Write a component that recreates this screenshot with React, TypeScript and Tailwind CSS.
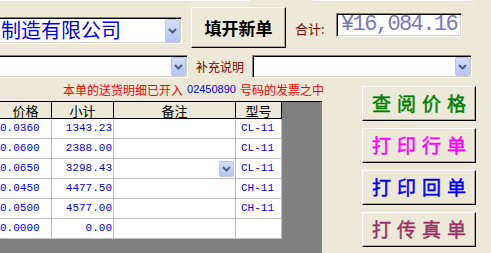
import React from 'react';

const rows = [
  { price: '0.0360', sub: '1343.23', model: 'CL-11' },
  { price: '0.0600', sub: '2388.00', model: 'CL-11' },
  { price: '0.0650', sub: '3298.43', model: 'CL-11', drop: true },
  { price: '0.0450', sub: '4477.50', model: 'CH-11' },
  { price: '0.0500', sub: '4577.00', model: 'CH-11' },
  { price: '0.0000', sub: '0.00', model: '' },
];

const sunken =
  'border border-t-[#808080] border-l-[#808080] border-b-white border-r-white shadow-[inset_1px_1px_0_#000,inset_-1px_-1px_0_#d4d0c8] bg-white';

const raised =
  'border border-t-white border-l-white border-b-black border-r-black shadow-[inset_-1px_-1px_0_#aca899] bg-[#ece9d8]';

function DropBtn({ className }: { className: string }) {
  return (
    <div
      className={
        'flex w-[15px] shrink-0 items-center justify-center rounded-[2px] border border-[#b4c6f0] bg-linear-to-b from-[#d3defd] to-[#b2c5f5] ' +
        className
      }
    >
      <svg width="9" height="6" viewBox="0 0 9 6">
        <path d="M1 1 L4.5 4.5 L8 1" fill="none" stroke="#4d6185" strokeWidth="2" />
      </svg>
    </div>
  );
}

function Combo({ className, btn, children }: { className: string; btn: string; children?: React.ReactNode }) {
  return (
    <div className={'flex items-center justify-between ' + sunken + ' ' + className}>
      <div className="min-w-0 flex-1 whitespace-nowrap">{children}</div>
      <DropBtn className={'mr-[1px] ' + btn} />
    </div>
  );
}

function SideButton({ color, children }: { color: string; children: React.ReactNode }) {
  return (
    <div
      className={
        'flex h-[35px] w-[114px] items-center justify-center pl-[6px] text-[19px] font-normal tracking-[6px] [-webkit-text-stroke:0.5px_currentColor] ' +
        raised +
        ' ' +
        color
      }
    >
      {children}
    </div>
  );
}

export default function App() {
  return (
    <div className="flex h-[253px] w-[491px] flex-col overflow-hidden bg-[#ece9d8] font-['Noto_Sans_CJK_SC',sans-serif]">
      {/* edges of controls above */}
      <div className="flex h-px">
        <div className="w-[250px] bg-white" />
        <div className="ml-[62px] w-[161px] bg-white" />
      </div>

      {/* Top row */}
      <div className="flex h-[54px] items-start">
        <Combo className="-ml-[3px] mt-[16px] h-[27px] w-[185px]" btn="h-[24px]">
          <span className="pl-[3px] text-[20px] leading-[24px] text-[#0000ff]">制造有限公司</span>
        </Combo>
        <div
          className={
            'ml-[9px] mt-[6px] flex h-[41px] w-[95px] items-center justify-center text-[17px] font-bold text-black ' + raised
          }
        >
          填开新单
        </div>
        <div className="ml-[9px] mt-[19px] w-[41px] text-[13px] leading-[17px] text-[#800000]">合计:</div>
        <div className={'mt-[12px] flex h-[24px] w-[126px] items-center pl-[4px] ' + sunken}>
          <span className="font-['Liberation_Mono',monospace] text-[22px] leading-none tracking-[-1.6px] text-[#7878c8]">
            ¥16,084.16
          </span>
        </div>
      </div>

      {/* Second row */}
      <div className="flex h-[23px] items-center">
        <Combo className="-ml-[3px] h-[23px] w-[191px]" btn="h-[19px]" />
        <div className="ml-[8px] w-[56px] text-[12px] leading-none text-[#800000]">补充说明</div>
        <Combo className="h-[23px] w-[220px]" btn="h-[19px]" />
      </div>

      {/* Middle */}
      <div className="flex flex-1">
        <div className="flex w-[322px] flex-col">
          <div className="flex h-[23px] items-center whitespace-nowrap pl-[63px] text-[12px] leading-none text-[#ff0000]">
            本单的送货明细已开入
            <span className="mx-[4px] font-['Liberation_Sans',sans-serif] text-[11px] text-[#0000ff]">02450890</span>
            号码的发票之中
          </div>
          <div className="flex-1 border-t border-black bg-[#808080]">
            {/* header */}
            <div className="flex h-[17px] text-[13px] leading-none text-black">
              {[
                ['价格', 'w-[52px]'],
                ['小计', 'w-[62px]'],
                ['备注', 'w-[122px]'],
                ['型号', 'w-[46px]'],
              ].map(([t, w]) => (
                <div
                  key={t}
                  className={'flex items-center justify-center border-r border-b border-black bg-[#ece9d8] ' + w}
                >
                  {t}
                </div>
              ))}
            </div>
            {/* body */}
            {rows.map((r, i) => (
              <div
                key={i}
                className="flex h-[20px] font-['Liberation_Mono',monospace] text-[11px] leading-none text-[#0000ff]"
              >
                <div className="flex w-[52px] items-center border-r border-b border-[#c0c0c0] bg-white">{r.price}</div>
                <div className="flex w-[62px] items-center justify-end border-r border-b border-[#c0c0c0] bg-white pr-[1px]">
                  {r.sub}
                </div>
                <div className="flex w-[122px] items-center justify-end border-r border-b border-[#c0c0c0] bg-white pr-[1px]">
                  {r.drop && <DropBtn className="h-[16px] w-[14px]" />}
                </div>
                <div className="flex w-[46px] items-center border-r border-b border-[#c0c0c0] bg-white pl-[5px]">
                  {r.model}
                </div>
              </div>
            ))}
          </div>
        </div>

        {/* Right buttons */}
        <div className="ml-[40px] mt-[8px] flex flex-col gap-[7px]">
          <SideButton color="text-[#008000]">查阅价格</SideButton>
          <SideButton color="text-[#ff00ff]">打印行单</SideButton>
          <SideButton color="text-[#0000ff]">打印回单</SideButton>
          <SideButton color="text-[#993366]">打传真单</SideButton>
        </div>
      </div>
    </div>
  );
}
